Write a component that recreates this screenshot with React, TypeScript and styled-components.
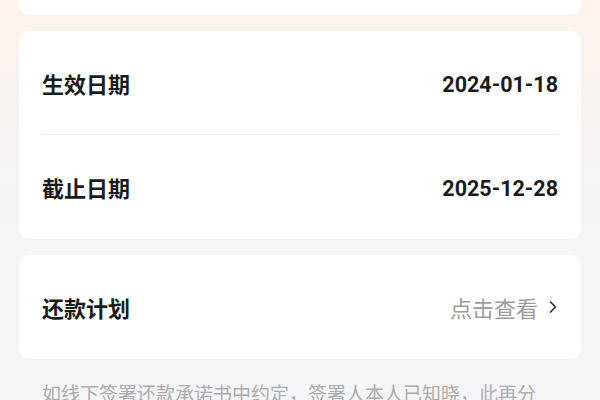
import React from "react";
import styled, { createGlobalStyle } from "styled-components";

const Global = createGlobalStyle`
  html, body { margin: 0; padding: 0; }
  body {
    font-family: "Noto Sans CJK SC", "Noto Sans", sans-serif;
    background: #f4f5f7;
  }
`;

const Page = styled.div`
  width: 600px;
  height: 400px;
  overflow: hidden;
  box-sizing: border-box;
  padding: 0 19px;
  background: linear-gradient(180deg, #fdf3ec 0px, #f8f3f1 110px, #f4f5f7 240px, #f4f5f7 100%);
  display: flex;
  flex-direction: column;
  gap: 16px;
`;

const Card = styled.div<{ $clipTop?: boolean }>`
  background: #ffffff;
  border-radius: 10px;
  padding: 0 23px;
  margin-top: ${(p) => (p.$clipTop ? "-45px" : "0")};
  height: ${(p) => (p.$clipTop ? "60px" : "auto")};
  flex-shrink: 0;
`;

const Row = styled.div<{ $divider?: boolean }>`
  height: ${(p) => (p.$divider ? "103px" : "104px")};
  display: flex;
  align-items: center;
  justify-content: space-between;
  border-bottom: ${(p) => (p.$divider ? "1px solid #eeeeef" : "none")};
`;

const Label = styled.span`
  font-size: 22px;
  font-weight: 600;
  color: #1b1b1b;
`;

const Value = styled.span`
  font-family: Roboto, "Noto Sans", sans-serif;
  font-size: 21.5px;
  font-weight: 700;
  color: #1b1b1b;
  padding-top: 3px;
`;

const Link = styled.span`
  display: flex;
  align-items: center;
  gap: 11px;
  font-size: 22px;
  color: #9c9c9c;
  margin-right: 1px;
`;

const Footer = styled.p`
  margin: 4px 0 0;
  padding: 0 40px 0 23px;
  font-size: 19px;
  line-height: 28px;
  color: #acacac;
`;

const Chevron = () => (
  <svg width="8" height="14" viewBox="0 0 8 14" fill="none">
    <path d="M1.5 2 L6.5 7 L1.5 12" stroke="#333333" strokeWidth="1.7" strokeLinecap="round" strokeLinejoin="round" />
  </svg>
);

export default function App() {
  return (
    <>
      <Global />
      <Page>
        <Card $clipTop />
        <Card>
          <Row $divider>
            <Label>生效日期</Label>
            <Value>2024-01-18</Value>
          </Row>
          <Row>
            <Label>截止日期</Label>
            <Value>2025-12-28</Value>
          </Row>
        </Card>
        <Card>
          <Row>
            <Label>还款计划</Label>
            <Link>
              点击查看
              <Chevron />
            </Link>
          </Row>
        </Card>
        <Footer>如线下签署还款承诺书中约定，签署人本人已知晓，此再分期还款计划以线下签署的承诺书为准。</Footer>
      </Page>
    </>
  );
}
